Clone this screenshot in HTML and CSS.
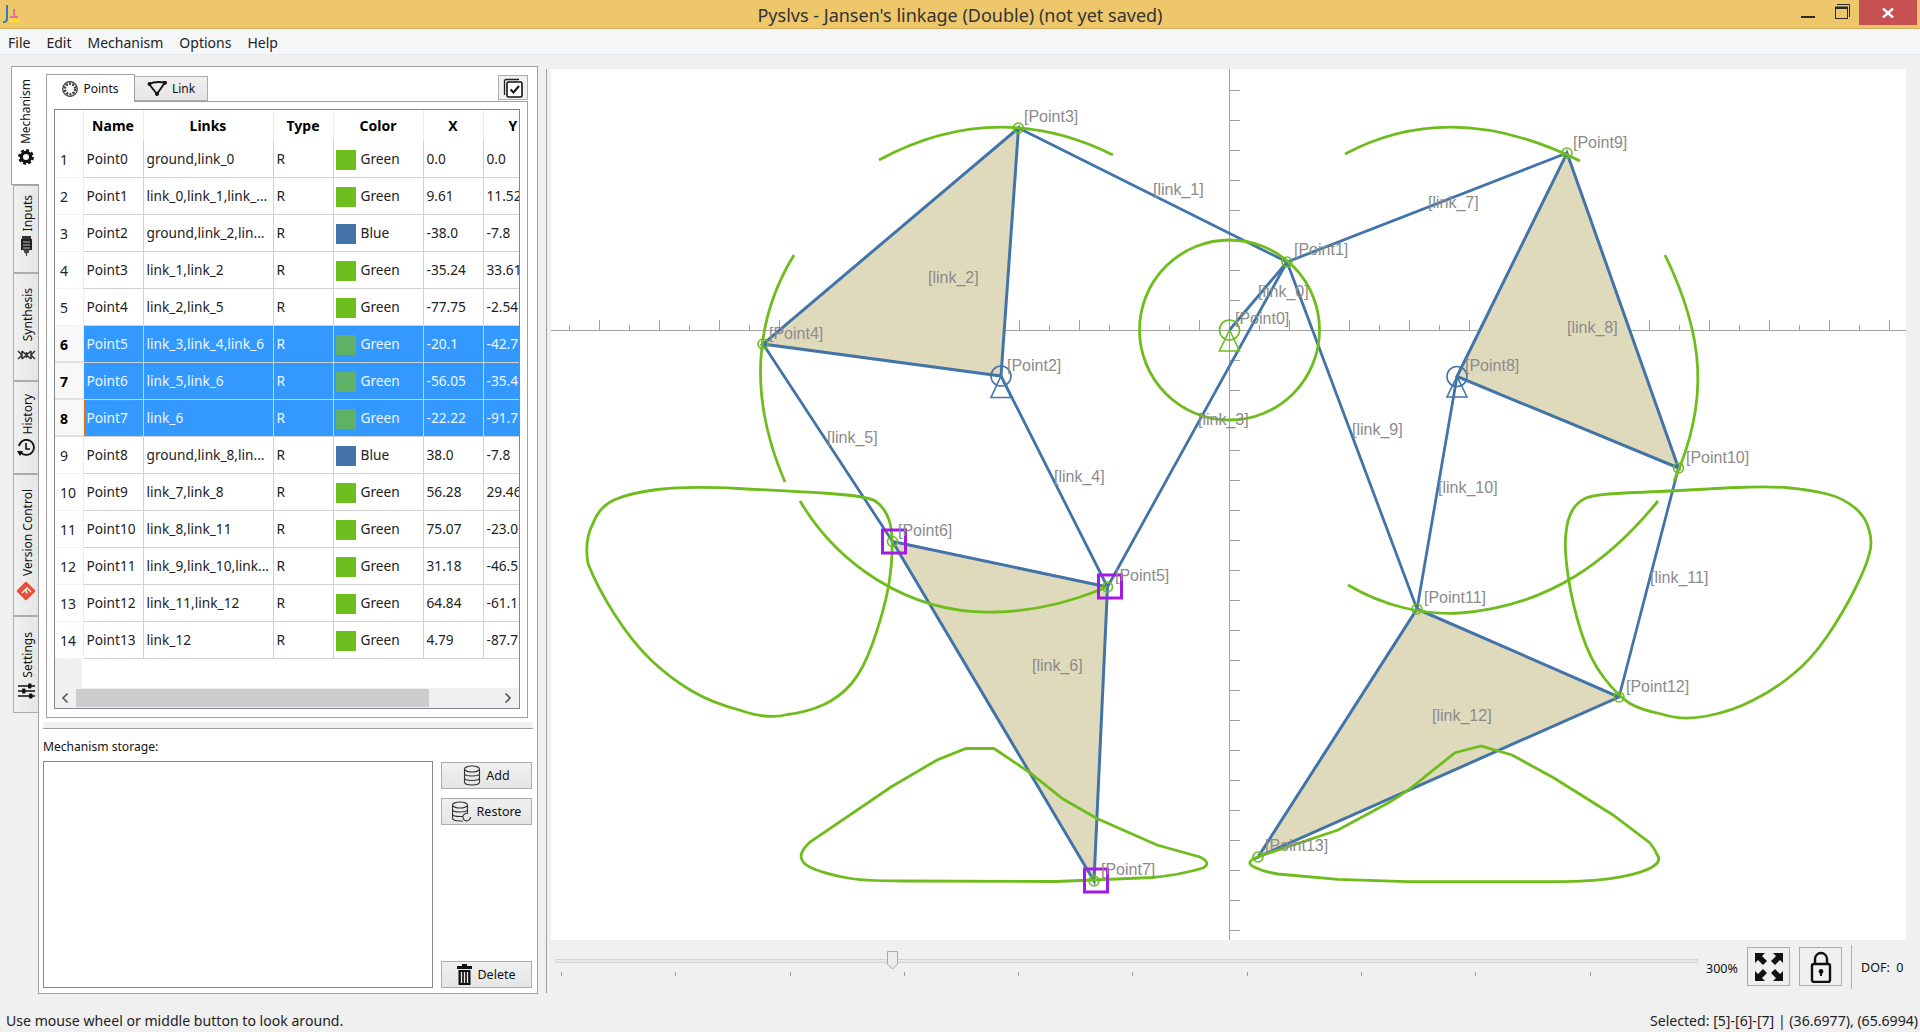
FILE: index.html
```html
<!DOCTYPE html>
<html lang="en">
<head>
    <meta charset="UTF-8">
    <title>Pyslvs - Jansen's linkage (Double) (not yet saved)</title>
    <link rel="stylesheet" href="styles.css">
</head>
<body>
    <div class="titlebar">
        <svg class="app-icon" width="18" height="20" viewBox="0 0 18 20">
            <path d="M5 1V15Q5 18 1 18" fill="none" stroke="#2a7fc0" stroke-width="2"/>
            <path d="M12 5V12M8 13H16" fill="none" stroke="#f04fa0" stroke-width="1.5"/>
            <path d="M7 17H17" stroke="#ffe21a" stroke-width="2.5"/>
        </svg>
        <div class="title">Pyslvs - Jansen's linkage (Double) (not yet saved)</div>
        <div class="win-controls">
            <svg class="win-btn" width="14" height="4" viewBox="0 0 14 4"><rect width="14" height="2" y="1" fill="#2b2b2b"/></svg>
            <svg class="win-btn win-restore" width="15" height="15" viewBox="0 0 15 15"><path d="M2 .5H14.5V13" fill="none" stroke="#2b2b2b"/><rect x=".5" y="3" width="12" height="11.5" fill="#eec76b" stroke="#2b2b2b"/><rect x="0" y="3" width="13" height="2" fill="#2b2b2b"/></svg>
            <div class="win-close"><svg width="12" height="10" viewBox="0 0 12 10"><path d="M1 0.5L11 9.5M11 0.5L1 9.5" stroke="#fff" stroke-width="2.4"/></svg></div>
        </div>
    </div>

    <div class="menubar">
        <span class="menu-item">File</span>
        <span class="menu-item">Edit</span>
        <span class="menu-item">Mechanism</span>
        <span class="menu-item">Options</span>
        <span class="menu-item">Help</span>
    </div>

    <div class="main">
        <div class="dock">
            <!-- West tabs -->
            <div class="vtabs">
                <div class="vtab active tab-mech">
                    <svg width="16" height="16" viewBox="0 0 16 16"><circle cx="8" cy="8" r="4.6" fill="none" stroke="#111" stroke-width="3.2"/><circle cx="8" cy="8" r="6.8" fill="none" stroke="#111" stroke-width="2.2" stroke-dasharray="3 2.34"/></svg>
                    <span class="vlabel">Mechanism</span>
                </div>
                <div class="vtab tab-inputs">
                    <svg width="13" height="20" viewBox="0 0 13 20"><rect x="2" y="0" width="9" height="3" fill="#333"/><rect x="1" y="3" width="11" height="11" fill="#222"/><path d="M3 6H10M3 9H10M3 12H10" stroke="#bbb"/><path d="M4 14H9L8 17H5ZM6.5 17V20" fill="#444" stroke="#444"/></svg>
                    <span class="vlabel">Inputs</span>
                </div>
                <div class="vtab tab-synth">
                    <svg width="19" height="10" viewBox="0 0 19 10"><path d="M1 1L5 5L1 9M18 1L14 5L18 9M5 1L14 9M14 1L5 9M5 1V9M14 1V9M9.5 2V8" fill="none" stroke="#333" stroke-width="1.5"/></svg>
                    <span class="vlabel">Synthesis</span>
                </div>
                <div class="vtab tab-history">
                    <svg width="18" height="18" viewBox="0 0 18 18"><path d="M3.5 13A7.5 7.5 0 1 0 2 7" fill="none" stroke="#111" stroke-width="1.8"/><path d="M0 12H6L3 17Z" fill="#111"/><path d="M9 4V10H13" fill="none" stroke="#111" stroke-width="1.6"/></svg>
                    <span class="vlabel">History</span>
                </div>
                <div class="vtab tab-vc">
                    <svg width="20" height="20" viewBox="0 0 20 20"><rect x="3" y="3" width="14" height="14" rx="1.5" transform="rotate(45 10 10)" fill="#e8503a"/><path d="M6 12L11 7L15 11M9.5 8.5L11 12.5" fill="none" stroke="#fff" stroke-width="1.3"/></svg>
                    <span class="vlabel">Version Control</span>
                </div>
                <div class="vtab tab-settings">
                    <svg width="17" height="16" viewBox="0 0 17 16"><path d="M0 3H17M0 8H17M0 13H17" stroke="#111" stroke-width="1.6"/><rect x="10" y="0.5" width="3.5" height="5" rx="1" fill="#111"/><rect x="4" y="5.5" width="3.5" height="5" rx="1" fill="#111"/><rect x="11" y="10.5" width="3.5" height="5" rx="1" fill="#111"/></svg>
                    <span class="vlabel">Settings</span>
                </div>
            </div>

            <div class="pane">
                <div class="tabbar">
                    <div class="tab active">
                        <svg width="16" height="16" viewBox="0 0 16 16"><circle cx="8" cy="8" r="7.3" fill="none" stroke="#333" stroke-width="1.2"/><circle cx="8" cy="8" r="5.2" fill="none" stroke="#444" stroke-width="2.6" stroke-dasharray="2 1.27"/><circle cx="8" cy="8" r="3.4" fill="#fff"/></svg>
                        Points
                    </div>
                    <div class="tab">
                        <svg width="20" height="16" viewBox="0 0 20 16"><path d="M2 3L10 13L18 1.5M2 3Q8 0 18 1.5" fill="none" stroke="#111" stroke-width="1.9"/><circle cx="2.5" cy="3" r="2" fill="#111"/><circle cx="10" cy="13" r="2" fill="#111"/><circle cx="18" cy="1.8" r="2" fill="#111"/></svg>
                        Link
                    </div>
                    <div class="corner-btn">
                        <svg width="20" height="20" viewBox="0 0 20 20"><path d="M1.5 17V3Q1.5 1.5 3 1.5H16" fill="none" stroke="#222" stroke-width="1.3"/><rect x="4" y="4" width="15" height="15" rx="1.5" fill="#fff" stroke="#111" stroke-width="1.6"/><path d="M7.5 11.5L10.5 14.5L16 8" fill="none" stroke="#111" stroke-width="2"/></svg>
                    </div>
                </div>
                <div class="tabpane">
                    <div class="table-frame">
                        <div class="table-wrap">
                            <table class="points">
                                <colgroup>
                                    <col class="c-head"><col class="c-name"><col class="c-links"><col class="c-type"><col class="c-color"><col class="c-x"><col class="c-y">
                                </colgroup>
                                <thead>
                                    <tr><th></th><th>Name</th><th>Links</th><th>Type</th><th>Color</th><th>X</th><th>Y</th></tr>
                                </thead>
                                <tbody>
                                    <tr><th>1</th><td>Point0</td><td>ground,link_0</td><td>R</td><td><span class="swatch green"></span>Green</td><td>0.0</td><td>0.0</td></tr>
                                    <tr><th>2</th><td>Point1</td><td>link_0,link_1,link_...</td><td>R</td><td><span class="swatch green"></span>Green</td><td>9.61</td><td>11.52</td></tr>
                                    <tr><th>3</th><td>Point2</td><td>ground,link_2,lin...</td><td>R</td><td><span class="swatch blue"></span>Blue</td><td>-38.0</td><td>-7.8</td></tr>
                                    <tr><th>4</th><td>Point3</td><td>link_1,link_2</td><td>R</td><td><span class="swatch green"></span>Green</td><td>-35.24</td><td>33.61</td></tr>
                                    <tr><th>5</th><td>Point4</td><td>link_2,link_5</td><td>R</td><td><span class="swatch green"></span>Green</td><td>-77.75</td><td>-2.54</td></tr>
                                    <tr class="selected"><th>6</th><td>Point5</td><td>link_3,link_4,link_6</td><td>R</td><td><span class="swatch green"></span>Green</td><td>-20.1</td><td>-42.7</td></tr>
                                    <tr class="selected"><th>7</th><td>Point6</td><td>link_5,link_6</td><td>R</td><td><span class="swatch green"></span>Green</td><td>-56.05</td><td>-35.4</td></tr>
                                    <tr class="selected"><th>8</th><td class="focus">Point7</td><td>link_6</td><td>R</td><td><span class="swatch green"></span>Green</td><td>-22.22</td><td>-91.7</td></tr>
                                    <tr><th>9</th><td>Point8</td><td>ground,link_8,lin...</td><td>R</td><td><span class="swatch blue"></span>Blue</td><td>38.0</td><td>-7.8</td></tr>
                                    <tr><th>10</th><td>Point9</td><td>link_7,link_8</td><td>R</td><td><span class="swatch green"></span>Green</td><td>56.28</td><td>29.46</td></tr>
                                    <tr><th>11</th><td>Point10</td><td>link_8,link_11</td><td>R</td><td><span class="swatch green"></span>Green</td><td>75.07</td><td>-23.0</td></tr>
                                    <tr><th>12</th><td>Point11</td><td>link_9,link_10,link...</td><td>R</td><td><span class="swatch green"></span>Green</td><td>31.18</td><td>-46.5</td></tr>
                                    <tr><th>13</th><td>Point12</td><td>link_11,link_12</td><td>R</td><td><span class="swatch green"></span>Green</td><td>64.84</td><td>-61.1</td></tr>
                                    <tr><th>14</th><td>Point13</td><td>link_12</td><td>R</td><td><span class="swatch green"></span>Green</td><td>4.79</td><td>-87.7</td></tr>
                                </tbody>
                            </table>
                        </div>
                        <div class="hscroll">
                            <svg class="arrow" width="8" height="12" viewBox="0 0 8 12"><path d="M6.5 1.5L2 6L6.5 10.5" fill="none" stroke="#555" stroke-width="1.6"/></svg>
                            <div class="hscroll-track"><div class="hscroll-handle"></div></div>
                            <svg class="arrow" width="8" height="12" viewBox="0 0 8 12"><path d="M1.5 1.5L6 6L1.5 10.5" fill="none" stroke="#555" stroke-width="1.6"/></svg>
                        </div>
                    </div>
                </div>

                <div class="splitter"></div>
                <div class="storage-label">Mechanism storage:</div>
                <div class="storage">
                    <div class="storage-list"></div>
                    <div class="storage-btns">
                        <div class="btn">
                            <svg width="18" height="21" viewBox="0 0 18 21"><g fill="none" stroke="#333" stroke-width="1.1"><ellipse cx="9" cy="4" rx="7.5" ry="3"/><path d="M1.5 4V17Q1.5 20 9 20T16.5 17V4M1.5 8.5Q1.5 11 9 11T16.5 8.5M1.5 13Q1.5 15.5 9 15.5T16.5 13"/></g></svg>
                            Add
                        </div>
                        <div class="btn">
                            <svg width="20" height="21" viewBox="0 0 20 21"><g fill="none" stroke="#333" stroke-width="1.1"><ellipse cx="8" cy="4" rx="7.5" ry="3"/><path d="M.5 4V17Q.5 20 8 20H11M15.5 4V12M.5 8.5Q.5 11 8 11T15.5 8.5M.5 13Q.5 15.5 8 15.5H11"/><path d="M18.5 16A3.8 3.8 0 1 1 16 12.5"/></g></svg>
                            Restore
                        </div>
                        <div class="btn btn-delete">
                            <svg width="15" height="21" viewBox="0 0 15 21"><path d="M5 0H10V2H15V5H0V2H5Z" fill="#111"/><path d="M1.5 6H13.5V21H1.5Z" fill="#111"/><path d="M4.5 8V19M7.5 8V19M10.5 8V19" stroke="#eee" stroke-width="1.3"/></svg>
                            Delete
                        </div>
                    </div>
                </div>
            </div>
        </div>

        <div class="right">
            <svg class="canvas" width="1355" height="871" viewBox="551 69 1355 871">
                <!-- axes -->
                <g class="axis">
                    <path d="M551 330.5H1906M1229.5 69V940"/>
                    <path d="M599.5 330V320M659.5 330V320M719.5 330V320M779.5 330V320M839.5 330V320M899.5 330V320M959.5 330V320M1019.5 330V320M1079.5 330V320M1139.5 330V320M1199.5 330V320M1289.5 330V320M1349.5 330V320M1409.5 330V320M1469.5 330V320M1529.5 330V320M1589.5 330V320M1649.5 330V320M1709.5 330V320M1769.5 330V320M1829.5 330V320M1889.5 330V320"/>
                    <path d="M569.5 330V325M629.5 330V325M689.5 330V325M749.5 330V325M809.5 330V325M869.5 330V325M929.5 330V325M989.5 330V325M1049.5 330V325M1109.5 330V325M1169.5 330V325M1259.5 330V325M1319.5 330V325M1379.5 330V325M1439.5 330V325M1499.5 330V325M1559.5 330V325M1619.5 330V325M1679.5 330V325M1739.5 330V325M1799.5 330V325M1859.5 330V325"/>
                    <path d="M1230 90.5H1240M1230 120.5H1240M1230 150.5H1240M1230 180.5H1240M1230 210.5H1240M1230 240.5H1240M1230 270.5H1240M1230 300.5H1240M1230 360.5H1240M1230 390.5H1240M1230 420.5H1240M1230 450.5H1240M1230 480.5H1240M1230 510.5H1240M1230 540.5H1240M1230 570.5H1240M1230 600.5H1240M1230 630.5H1240M1230 660.5H1240M1230 690.5H1240M1230 720.5H1240M1230 750.5H1240M1230 780.5H1240M1230 810.5H1240M1230 840.5H1240M1230 870.5H1240M1230 900.5H1240M1230 930.5H1240"/>
                </g>

                <!-- links -->
                <g class="link-face">
                    <polygon points="1001,376 1018.5,128 763,344"/>
                    <polygon points="1107.5,587 892.5,541.5 1094,881"/>
                    <polygon points="1457,376.5 1567,153 1678.5,468"/>
                    <polygon points="1417,609 1619,697 1258,857"/>
                </g>
                <g class="link-line">
                    <path d="M1018.5 128L1287 262M1287 262L1567 153M1229.5 330L1287 262M1287 262L1107.5 587M1001 376L1107.5 587M763 344L892.5 541.5M1287 262L1417 609M1457 376.5L1417 609M1678.5 468L1619 697"/>
                </g>

                <!-- path of each point -->
                <g class="track">
                    <circle cx="1229.5" cy="330" r="90"/>
                    <path d="M879 160Q996 97 1113 155"/>
                    <path d="M794 255C757 315 746 392 785 482"/>
                    <path d="M800 501C835 560 905 615 996 612C1040 611 1075 600 1107 587"/>
                    <path d="M1345 154Q1452 97 1580 161"/>
                    <path d="M1665 255C1704 335 1710 400 1674 481"/>
                    <path d="M1348 585C1385 607 1425 615 1460 613C1550 606 1610 560 1658 501"/>
                    <path d="M738 488.5Q686 486 657.5 489.5Q629 493 614 500Q599 507 593 523.5Q584 540 588 563.5Q597 587 615 615Q633 643 651.5 660.5Q670 678 691 690.5Q712 703 739.5 710Q767 720 787.5 714.5Q808 712 824 704.5Q840 697 851.5 683.5Q863 670 872 645Q881 620 886 598.5Q891 577 892 553.5Q893 530 888.5 518.5Q884 507 876 501.5Q868 496 829 493.5Q790 491 738 488.5Z"/>
                    <path d="M966 748.5L994 748.5L1029 772L1063 799L1097 818.5L1157 845L1200 857Q1212 863 1203 868Q1180 875 1152 877.5L1056 881.5L904 881Q860 881 845 877.5Q812 871 804 863Q796 855 810 842L891 787L937 760Z"/>
                    <path d="M1790 488Q1769 486 1737 487.5Q1705 489 1689 490Q1673 491 1634 492.5Q1595 494 1586 498Q1577 502 1572 511Q1567 520 1566 533Q1564 547 1568 575Q1572 603 1581 631.5Q1590 660 1604.5 678.5Q1619 697 1630 703.5Q1641 710 1661.5 714Q1682 721 1707 716Q1733 711 1753.5 700Q1774 690 1792 675Q1811 660 1827 636.5Q1843 613 1854.5 590Q1866 567 1869 555Q1873 543 1869 530Q1866 517 1854.5 507.5Q1843 498 1827 494Q1811 490 1790 488Z"/>
                    <path d="M1481 746L1455 752.7L1425 776.7Q1407 792 1388 803L1338 830L1258 856.7Q1244 862 1254 867Q1264 872 1278 874L1338 879.3L1407 881.7L1563 881.7Q1600 881 1622 876.7Q1664 868 1658 856Q1654 848 1650 843L1613 815L1554 778L1512 755Z"/>
                </g>

                <!-- joints -->
                <g class="joint">
                    <circle cx="1287" cy="262" r="5"/><circle cx="1018.5" cy="128" r="5"/><circle cx="763" cy="344" r="5"/>
                    <circle cx="1107.5" cy="587" r="5"/><circle cx="892.5" cy="541.5" r="5"/><circle cx="1094" cy="881" r="5"/>
                    <circle cx="1567" cy="153" r="5"/><circle cx="1678.5" cy="468" r="5"/><circle cx="1417" cy="609" r="5"/>
                    <circle cx="1619" cy="697" r="5"/><circle cx="1258" cy="857" r="5"/>
                    <circle cx="1229.5" cy="330" r="10"/><path d="M1229.5 330L1219.5 351H1239.5Z"/>
                </g>
                <g class="joint ground">
                    <circle cx="1001" cy="376" r="10"/><path d="M1001 376L991 397.5H1011Z"/>
                    <circle cx="1457" cy="376.5" r="10"/><path d="M1457 376.5L1447 397H1467Z"/>
                </g>
                <g class="picked">
                    <rect x="882.5" y="530" width="23" height="23"/>
                    <rect x="1098.5" y="575" width="23" height="23"/>
                    <rect x="1084.5" y="869" width="23" height="23"/>
                </g>

                <g class="lbl">
                    <text x="1235" y="324">[Point0]</text>
                    <text x="1294" y="255">[Point1]</text>
                    <text x="1007" y="371">[Point2]</text>
                    <text x="1024" y="122">[Point3]</text>
                    <text x="769" y="339">[Point4]</text>
                    <text x="1115" y="581">[Point5]</text>
                    <text x="898" y="536">[Point6]</text>
                    <text x="1101" y="875">[Point7]</text>
                    <text x="1465" y="371">[Point8]</text>
                    <text x="1573" y="148">[Point9]</text>
                    <text x="1686" y="463">[Point10]</text>
                    <text x="1424" y="603">[Point11]</text>
                    <text x="1626" y="692">[Point12]</text>
                    <text x="1265" y="851">[Point13]</text>
                    <text x="1258" y="297">[link_0]</text>
                    <text x="1153" y="195">[link_1]</text>
                    <text x="928" y="283">[link_2]</text>
                    <text x="1198" y="425">[link_3]</text>
                    <text x="1054" y="482">[link_4]</text>
                    <text x="827" y="443">[link_5]</text>
                    <text x="1032" y="671">[link_6]</text>
                    <text x="1428" y="208">[link_7]</text>
                    <text x="1567" y="333">[link_8]</text>
                    <text x="1352" y="435">[link_9]</text>
                    <text x="1438" y="493">[link_10]</text>
                    <text x="1650" y="583">[link_11]</text>
                    <text x="1432" y="721">[link_12]</text>
                </g>
            </svg>

            <div class="zoombar">
                <div class="slider">
                    <div class="groove"></div>
                    <div class="ticks">
                        <i></i><i></i><i></i><i></i><i></i><i></i><i></i><i></i><i></i><i></i>
                    </div>
                    <svg class="handle" width="11" height="19" viewBox="0 0 11 19"><path d="M.5.5H10.5V13L5.5 18L.5 13Z" fill="#ececec" stroke="#a8a8a8"/></svg>
                </div>
                <span class="zoom-value">300%</span>
                <div class="tool-btn">
                    <svg width="30" height="30" viewBox="0 0 30 30"><path d="M1 1H11L8 4L13 9L9 13L4 8L1 11ZM29 1V11L26 8L21 13L17 9L22 4L19 1ZM1 29V19L4 22L9 17L13 21L8 26L11 29ZM29 29H19L22 26L17 21L21 17L26 22L29 19Z" fill="#111"/></svg>
                </div>
                <div class="tool-btn">
                    <svg width="22" height="32" viewBox="0 0 22 32"><path d="M5 14V8A6 6 0 0 1 17 8V14" fill="none" stroke="#111" stroke-width="2.4"/><rect x="2" y="13" width="18" height="18" rx="2" fill="#f2f2f2" stroke="#111" stroke-width="2.4"/><circle cx="11" cy="20.5" r="2.4" fill="#111"/><path d="M10 21H12V25H10Z" fill="#111"/></svg>
                </div>
                <div class="sep"></div>
                <span class="dof">DOF:&nbsp;&nbsp;0</span>
            </div>
        </div>
    </div>

    <div class="statusbar">
        <span>Use mouse wheel or middle button to look around.</span>
        <span>Selected: [5]-[6]-[7] | (36.6977), (65.6994)</span>
    </div>
</body>
</html>
```

FILE: styles.css
```css
* {
    box-sizing: border-box;
}
body {
    margin: 0;
    width: 1920px;
    height: 1032px;
    display: flex;
    flex-direction: column;
    overflow: hidden;
    background: #f0f0f0;
    color: #111;
    font-family: "Noto Sans", "Open Sans", sans-serif;
    font-size: 13px;
}

/* window chrome */
.titlebar {
    height: 29px;
    flex: none;
    display: flex;
    align-items: center;
    position: relative;
    background: #eec76b;
    border-bottom: 1px solid #d4ae5e;
}
.app-icon {
    margin: 0 0 0 2px;
}
.title {
    position: absolute;
    left: 0;
    right: 0;
    top: 3px;
    text-align: center;
    font-size: 18px;
    color: #333;
}
.win-controls {
    margin-left: auto;
    display: flex;
    height: 100%;
    padding-right: 3px;
}
.win-btn {
    margin-top: 15px;
    margin-right: 20px;
}
.win-restore {
    margin-top: 4px;
    margin-right: 9px;
}
.win-close {
    width: 58px;
    height: 25px;
    background: #c75050;
    display: flex;
    align-items: center;
    justify-content: center;
}
.menubar {
    height: 26px;
    flex: none;
    display: flex;
    align-items: center;
    background: #f5f6f7;
    border-bottom: 1px solid #e8e8e8;
    padding: 1px 0 0 8px;
    gap: 16px;
    font-size: 14px;
    color: #222;
}

.main {
    flex: 1;
    display: flex;
    min-height: 0;
}
.dock {
    display: flex;
    margin: 11px 0 0 11px;
    height: 928px;
    flex: none;
}

/* west tabs */
.vtabs {
    width: 27px;
    display: flex;
    flex-direction: column;
    align-items: flex-end;
    position: relative;
    z-index: 1;
}
.vtab {
    width: 25px;
    display: flex;
    flex-direction: column-reverse;
    align-items: center;
    gap: 5px;
    background: linear-gradient(90deg, #f0f0f0, #e6e6e6);
    border: 1px solid #acacac;
    border-right: none;
    padding-bottom: 16px;
}
.vtab svg {
    flex: none;
}
.vtab .vlabel {
    margin-left: 3px;
}
.vtab.active {
    width: 28px;
    margin-right: -1px;
    background: #fff;
    border: 1px solid #a0a0a0;
    border-right: none;
}
.vtab.active .vlabel {
    margin-left: 0;
}
.vlabel {
    writing-mode: vertical-rl;
    transform: rotate(180deg);
    font-size: 12px;
    line-height: 16px;
}
.tab-mech { height: 119px; padding-bottom: 19px; }
.tab-inputs { height: 88px; }
.tab-synth { height: 108px; padding-bottom: 20px; gap: 9px; }
.tab-history { height: 93px; padding-bottom: 16px; }
.tab-vc { height: 142px; padding-bottom: 14px; }
.tab-settings { height: 97px; padding-bottom: 13px; }

.pane {
    width: 500px;
    background: #fff;
    border: 1px solid #a0a0a0;
    padding: 7px 4px 4px;
    display: flex;
    flex-direction: column;
}

/* points / link tabs */
.tabbar {
    height: 27px;
    margin-left: 3px;
    width: 482px;
    display: flex;
    align-items: flex-end;
    flex: none;
}
.tab {
    width: 73px;
    height: 25px;
    display: flex;
    align-items: center;
    justify-content: center;
    gap: 5px;
    font-size: 12px;
    background: linear-gradient(#f0f0f0, #e5e5e5);
    border: 1px solid #acacac;
    border-left: none;
}
.tab.active {
    width: 89px;
    height: 28px;
    margin-bottom: -1px;
    background: #fff;
    border: 1px solid #a0a0a0;
    border-bottom: none;
    position: relative;
}
.corner-btn {
    margin: 0 0 1px auto;
    width: 30px;
    height: 25px;
    display: flex;
    align-items: center;
    justify-content: center;
    background: #f0f0f0;
    border: 1px solid #acacac;
}
.tabpane {
    width: 482px;
    height: 617px;
    margin-left: 3px;
    padding: 7px 7px 8px;
    border: 1px solid #a0a0a0;
    flex: none;
}
.table-frame {
    height: 600px;
    display: flex;
    flex-direction: column;
    border: 1px solid #828790;
}
.table-wrap {
    flex: 1;
    overflow: hidden;
    background: linear-gradient(90deg, #f0f0f0 27px, #fff 27px);
}
.points {
    border-collapse: collapse;
    table-layout: fixed;
    width: 488px;
    font-size: 13.7px;
    color: #222;
}
.c-head { width: 28px; }
.c-name { width: 60px; }
.c-links { width: 130px; }
.c-type { width: 60px; }
.c-color { width: 90px; }
.c-x { width: 60px; }
.c-y { width: 60px; }
.points thead th {
    height: 30px;
    padding: 0;
    background: #fff;
    color: #000;
    font-weight: 700;
    font-size: 14px;
    text-align: center;
    border-right: 1px solid #e4eefb;
}
.points tbody th {
    height: 37px;
    padding: 2px 0 0 5px;
    background: #fff;
    color: #222;
    font-weight: 400;
    font-size: 14px;
    text-align: left;
    border-right: 1px solid #e4eefb;
    border-bottom: 1px solid #f0f4fa;
}
.points td {
    height: 37px;
    padding: 0 3px;
    white-space: nowrap;
    overflow: hidden;
    border-right: 1px solid #d0d0d0;
    border-bottom: 1px solid #d0d0d0;
}
.swatch {
    display: inline-block;
    width: 20px;
    height: 20px;
    margin: -4px 5px -4px -1px;
    vertical-align: -2px;
}
.swatch.green { background: #6cbf1c; }
.swatch.blue { background: #4374a9; }
.selected td {
    background: #3399ff;
    color: #eef6ff;
}
.selected .swatch.green { background: #5fb167; }
.points .selected th {
    font-weight: 700;
    color: #000;
    background: #f8f8f8;
    border-bottom: 2px solid #e0e0e0;
}
.points td.focus {
    outline: 1px dotted #e8801a;
    outline-offset: -2px;
}
.hscroll {
    height: 20px;
    flex: none;
    display: flex;
    align-items: center;
    background: #f0f0f0;
    padding: 0 7px 0 6px;
}
.arrow {
    flex: none;
}
.hscroll-track {
    flex: 1;
    height: 18px;
    margin-left: 7px;
    margin-right: 7px;
}
.hscroll-handle {
    width: 353px;
    height: 100%;
    background: #cdcdcd;
}

/* mechanism storage */
.splitter {
    height: 7px;
    margin-top: 4px;
    width: 490px;
    background: #f0f0f0;
    border-bottom: 1px solid #a0a0a0;
    flex: none;
}
.storage-label {
    margin-top: 9px;
    line-height: 18px;
    font-size: 12.1px;
    color: #111;
}
.storage {
    display: flex;
    gap: 8px;
    margin-top: 5px;
    height: 227px;
}
.storage-list {
    width: 390px;
    background: #fff;
    border: 1px solid #828790;
}
.storage-btns {
    width: 91px;
    padding-top: 1px;
    display: flex;
    flex-direction: column;
    gap: 9px;
}
.btn {
    height: 27px;
    display: flex;
    align-items: center;
    justify-content: center;
    gap: 5px;
    font-size: 12.5px;
    background: linear-gradient(#f0f0f0, #e5e5e5);
    border: 1px solid #acacac;
}
.btn-delete {
    margin-top: auto;
}

/* canvas side */
.right {
    margin: 14px 0 17px 8px;
    padding-left: 4px;
    width: 1360px;
    border-left: 1px solid #a0a0a0;
    display: flex;
    flex-direction: column;
}
.canvas {
    display: block;
    background: #fff;
    flex: none;
}
.axis path {
    fill: none;
    stroke: #a0a0a0;
    stroke-width: 1;
}
.link-face polygon {
    fill: #e0dabd;
    stroke: #4374a9;
    stroke-width: 3;
}
.link-line path {
    fill: none;
    stroke: #4374a9;
    stroke-width: 2.8;
}
.track * {
    fill: none;
    stroke: #6ebd1c;
    stroke-width: 2.8;
}
.joint * {
    fill: none;
    stroke: #6ebd1c;
    stroke-width: 1.6;
}
.joint.ground * {
    stroke: #4374a9;
}
.picked rect {
    fill: none;
    stroke: #a01ae8;
    stroke-width: 3;
}
.lbl text {
    font-family: "Liberation Sans", Arial, sans-serif;
    font-size: 16px;
    fill: #8b8b8b;
}
.zoombar {
    flex: 1;
    display: flex;
    align-items: center;
    font-size: 12.5px;
}
.slider {
    width: 1143px;
    margin-left: 4px;
    position: relative;
    flex: none;
    height: 28px;
    padding-top: 6px;
}
.groove {
    height: 4px;
    background: #e9ebe9;
    border: 1px solid #d4d6d4;
}
.ticks {
    display: flex;
    gap: 113.3px;
    margin: 9px 0 0 6px;
}
.ticks i {
    width: 1px;
    height: 4px;
    background: #a0a090;
}
.handle {
    position: absolute;
    left: 332px;
    top: -2px;
}
.zoom-value {
    margin-left: 8px;
    width: 41px;
    margin-top: 3px;
}
.tool-btn {
    width: 43px;
    height: 39px;
    margin-right: 9px;
    display: flex;
    align-items: center;
    justify-content: center;
    background: #efefef;
    border: 1px solid #acacac;
}
.sep {
    width: 1px;
    height: 44px;
    background: #b0b0b0;
}
.dof {
    margin-left: 9px;
    margin-top: 1px;
    white-space: nowrap;
}
.statusbar {
    height: 22px;
    flex: none;
    display: flex;
    justify-content: space-between;
    align-items: center;
    padding: 0 2px 2px 6px;
    font-size: 14.1px;
    color: #222;
}
```
